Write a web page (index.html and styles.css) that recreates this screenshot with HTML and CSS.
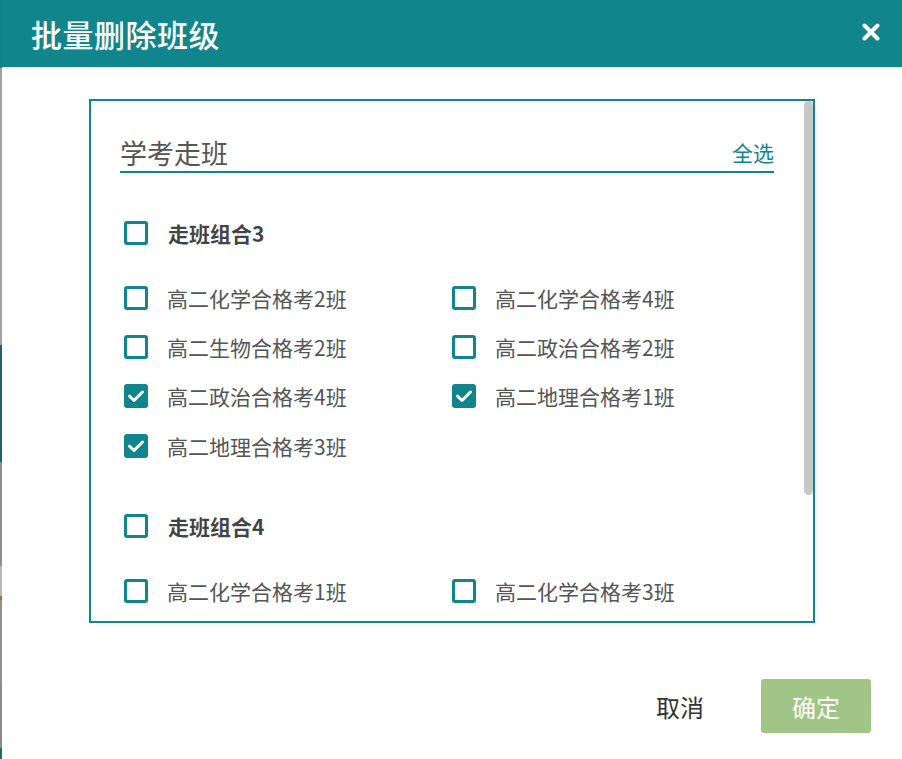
FILE: index.html
```html
<!DOCTYPE html>
<html lang="zh-CN">
<head>
<meta charset="utf-8">
<title>批量删除班级</title>
<link rel="stylesheet" href="styles.css">
</head>
<body>
<div class="backdrop-strip">
  <div class="seg seg-a"></div>
  <div class="seg seg-b"></div>
  <div class="seg seg-c"></div>
  <div class="seg seg-d"></div>
  <div class="seg seg-e"></div>
  <div class="seg seg-f"></div>
  <div class="seg seg-g"></div>
  <div class="seg seg-h"></div>
  <div class="seg seg-i"></div>
</div>
<div class="dialog">
  <header class="dialog-header">
    <h1 class="dialog-title">批量删除班级</h1>
    <button class="close-btn" aria-label="关闭">
      <svg width="18" height="18" viewBox="0 0 18 18"><path d="M2.5 2.5 L15.5 15.5 M15.5 2.5 L2.5 15.5" stroke="#fff" stroke-width="4" stroke-linecap="round" fill="none"/></svg>
    </button>
  </header>
  <main class="dialog-body">
    <div class="list-box">
      <div class="list-scroll">
        <div class="section-head">
          <span class="section-title">学考走班</span>
          <a class="select-all">全选</a>
        </div>

        <div class="group group-first">
          <div class="group-head">
            <span class="cb"></span>
            <span class="group-label">走班组合3</span>
          </div>
          <div class="items">
            <div class="item"><span class="cb"></span><span class="item-label">高二化学合格考2班</span></div>
            <div class="item"><span class="cb"></span><span class="item-label">高二化学合格考4班</span></div>
            <div class="item"><span class="cb"></span><span class="item-label">高二生物合格考2班</span></div>
            <div class="item"><span class="cb"></span><span class="item-label">高二政治合格考2班</span></div>
            <div class="item"><span class="cb checked"><svg width="24" height="24" viewBox="0 0 24 24"><path d="M5.5 12.2 L10 16.5 L18.5 8" stroke="#fff" stroke-width="3" fill="none" stroke-linecap="round" stroke-linejoin="round"/></svg></span><span class="item-label">高二政治合格考4班</span></div>
            <div class="item"><span class="cb checked"><svg width="24" height="24" viewBox="0 0 24 24"><path d="M5.5 12.2 L10 16.5 L18.5 8" stroke="#fff" stroke-width="3" fill="none" stroke-linecap="round" stroke-linejoin="round"/></svg></span><span class="item-label">高二地理合格考1班</span></div>
            <div class="item"><span class="cb checked"><svg width="24" height="24" viewBox="0 0 24 24"><path d="M5.5 12.2 L10 16.5 L18.5 8" stroke="#fff" stroke-width="3" fill="none" stroke-linecap="round" stroke-linejoin="round"/></svg></span><span class="item-label">高二地理合格考3班</span></div>
          </div>
        </div>

        <div class="group">
          <div class="group-head">
            <span class="cb"></span>
            <span class="group-label">走班组合4</span>
          </div>
          <div class="items">
            <div class="item"><span class="cb"></span><span class="item-label">高二化学合格考1班</span></div>
            <div class="item"><span class="cb"></span><span class="item-label">高二化学合格考3班</span></div>
          </div>
        </div>
      </div>
      <div class="scroll-thumb"></div>
    </div>
  </main>
  <footer class="dialog-footer">
    <button class="btn-cancel">取消</button>
    <button class="btn-ok">确定</button>
  </footer>
</div>
</body>
</html>
```

FILE: styles.css
```css
* { box-sizing: border-box; }

html, body {
  margin: 0;
  padding: 0;
  background: #ffffff;
}

body {
  display: flex;
  width: 902px;
  height: 759px;
  overflow: hidden;
  font-family: "Noto Sans CJK SC", "Noto Sans", sans-serif;
}

.backdrop-strip {
  width: 2px;
  flex: none;
  display: flex;
  flex-direction: column;
}
.seg { flex: none; }
.seg-a { height: 68px; background: #10848b; }
.seg-b { height: 277px; background: #a2a2a2; }
.seg-c { height: 117px; background: #1f6165; }
.seg-d { height: 104px; background: #8e8e8e; }
.seg-e { height: 30px; background: #b8b8b8; }
.seg-f { height: 4px; background: #c0643a; }
.seg-g { height: 84px; background: #909090; }
.seg-h { height: 64px; background: #8a8a8a; }
.seg-i { height: 11px; background: #1f6a6e; }

.dialog {
  width: 900px;
  flex: none;
  background: #fff;
  display: flex;
  flex-direction: column;
}

.dialog-header {
  height: 68px;
  background: #10858c;
  display: flex;
  align-items: center;
  justify-content: space-between;
  padding: 0 22px 0 29px;
  border-bottom: 1px solid #e4e8e8;
}

.dialog-title {
  margin: 0;
  color: #fff;
  font-size: 31px;
  font-weight: 500;
  line-height: 40px;
  letter-spacing: 0.5px;
}

.close-btn {
  width: 18px;
  height: 18px;
  padding: 0;
  border: 0;
  background: none;
  display: block;
  margin-top: -3px;
}
.close-btn svg { display: block; }

.dialog-body {
  padding: 31px 0 0 87px;
}

.list-box {
  position: relative;
  width: 726px;
  height: 524px;
  border: 2px solid #10858c;
  overflow: hidden;
}

.list-scroll {
  height: 100%;
  overflow: hidden;
  padding: 35px 39px 0 29px;
}

.scroll-thumb {
  position: absolute;
  top: 0;
  right: 0;
  width: 9px;
  height: 394px;
  border-radius: 4.5px;
  background: #c8c8c8;
}

.section-head {
  display: flex;
  justify-content: space-between;
  align-items: center;
  border-bottom: 2px solid #10858c;
  padding-bottom: 1px;
}

.section-title {
  font-size: 27px;
  line-height: 34px;
  color: #555;
}

.select-all {
  font-size: 21px;
  line-height: 28px;
  color: #10858c;
  cursor: pointer;
  margin-bottom: 3px;
}

.group { margin-top: 43.5px; }
.group-first { margin-top: 47.5px; }

.group-head {
  display: flex;
  align-items: center;
  height: 24px;
  padding-left: 4px;
  gap: 20px;
}

.group-label {
  font-size: 21px;
  font-weight: 700;
  color: #444;
  line-height: 24px;
}

.items {
  margin-top: 28.5px;
  display: grid;
  grid-template-columns: 328px 1fr;
  grid-auto-rows: 49.4px;
}

.item {
  display: flex;
  align-items: center;
  padding-left: 4px;
  gap: 19px;
}

.item-label {
  font-size: 21px;
  color: #555;
  line-height: 24px;
}

.cb {
  width: 24px;
  height: 24px;
  flex: none;
  border: 3px solid #10858c;
  border-radius: 3px;
  background: #fff;
  display: block;
}

.cb.checked {
  border: 0;
  background: #10858c;
}
.cb.checked svg { display: block; }

.dialog-footer {
  display: flex;
  justify-content: flex-end;
  align-items: center;
  padding: 56px 31px 0 0;
}

.btn-cancel {
  height: 54px;
  padding: 0;
  margin-right: 57px;
  border: 0;
  background: none;
  font-family: inherit;
  font-size: 24px;
  color: #333;
}

.btn-ok {
  width: 110px;
  height: 54px;
  border: 0;
  border-radius: 3px;
  background: #a1c586;
  color: #fff;
  font-family: inherit;
  font-size: 24px;
  padding: 0;
}
```
